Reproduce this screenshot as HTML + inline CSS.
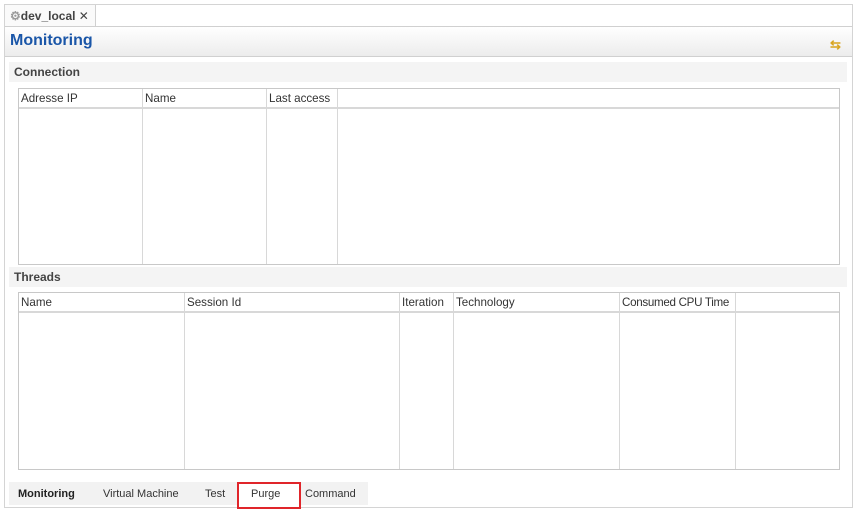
<!DOCTYPE html><html><head><style>
*{box-sizing:border-box;margin:0;padding:0}
body{width:857px;height:512px;background:#fff;font-family:"Liberation Sans",sans-serif;position:relative;overflow:hidden}
.a{position:absolute}
.t{border:1px solid #c8c8c8;background:#fff}
.h{height:20px;border-bottom:2px solid #d8d8d8;position:relative}
.c{position:absolute;top:0;bottom:0;border-left:1px solid #d8d8d8}
.l{position:absolute;top:3px;font-size:11.6px;color:#333}
.sec{font-size:12px;font-weight:bold;color:#444;background:#f4f4f4}
</style></head><body>
<div class="a" style="left:4px;top:4px;width:849px;height:504px;border:1px solid #d4d4d4"></div>
<div class="a" style="left:5px;top:5px;width:91px;height:22px;border-right:1px solid #d0d0d0;background:#fafafa;font-size:12px;font-weight:bold;color:#444;padding:4px 0 0 5px"><span style="color:#999">⚙</span>dev_local <span style="font-weight:normal">✕</span></div>
<div class="a" style="left:5px;top:26px;width:847px;height:31px;border-top:1px solid #d0d0d0;border-bottom:1px solid #d0d0d0;background:linear-gradient(#fff,#ececec)"></div>
<div class="a" style="left:10px;top:32px;font-size:16px;font-weight:bold;color:#1a56a8">Monitoring</div>
<div class="a" style="left:830px;top:37px;color:#d9a520;font-size:13px;font-weight:bold">⇆</div>
<div class="a sec" style="left:9px;top:62px;width:838px;height:20px;padding:3px 5px">Connection</div>
<div class="a t" style="left:18px;top:88px;width:822px;height:177px">
<div class="h"><span class="l" style="left:2px">Adresse IP</span><span class="l" style="left:126px">Name</span><span class="l" style="left:250px">Last access</span></div>
<div class="c" style="left:123px"></div><div class="c" style="left:247px"></div><div class="c" style="left:318px"></div></div>
<div class="a sec" style="left:9px;top:267px;width:838px;height:20px;padding:3px 5px">Threads</div>
<div class="a t" style="left:18px;top:292px;width:822px;height:178px">
<div class="h"><span class="l" style="left:2px">Name</span><span class="l" style="left:168px">Session Id</span><span class="l" style="left:383px">Iteration</span><span class="l" style="left:437px">Technology</span><span class="l" style="left:603px;letter-spacing:-0.3px">Consumed CPU Time</span></div>
<div class="c" style="left:165px"></div><div class="c" style="left:380px"></div><div class="c" style="left:434px"></div><div class="c" style="left:600px"></div><div class="c" style="left:716px"></div></div>
<div class="a" style="left:9px;top:482px;width:359px;height:23px;background:#f2f2f2"></div>
<div class="a" style="top:488px;left:18px;font-size:11px;font-weight:bold;color:#222">Monitoring</div>
<div class="a" style="top:488px;left:103px;font-size:11px;color:#333">Virtual Machine</div>
<div class="a" style="top:488px;left:205px;font-size:11px;color:#333">Test</div>
<div class="a" style="top:482px;left:237px;width:64px;height:27px;border:2px solid #e0252a;background:#fff"></div>
<div class="a" style="top:488px;left:251px;font-size:11px;color:#333">Purge</div>
<div class="a" style="top:488px;left:305px;font-size:11px;color:#333">Command</div>
</body></html>
